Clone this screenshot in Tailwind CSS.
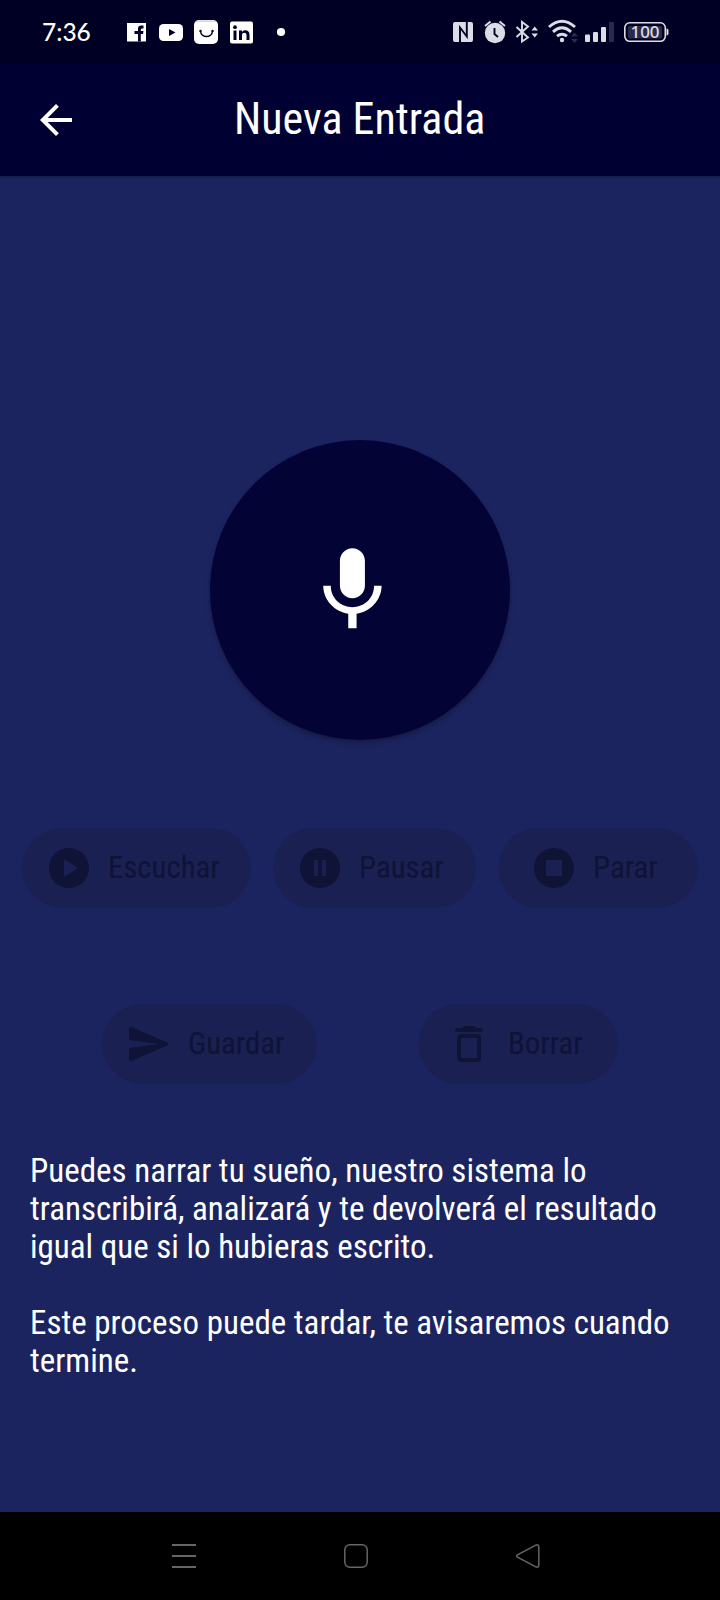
<!DOCTYPE html>
<html lang="es">
<head>
<meta charset="utf-8">
<title>Nueva Entrada</title>
<script src="https://cdn.jsdelivr.net/npm/@tailwindcss/browser@4"></script>
</head>
<body class="w-[720px] h-[1600px] overflow-hidden bg-[#1c2460] text-white font-['Roboto_Condensed','Roboto',sans-serif] font-stretch-condensed">
<div class="flex flex-col h-full">

  <!-- Status bar -->
  <div class="h-16 shrink-0 bg-[#000024] flex items-center">
    <span class="ml-[42px] w-[78px] shrink-0 font-['Lato',sans-serif] text-[24.5px] leading-8 font-medium font-stretch-normal">7:36</span>
    <svg class="w-[166px] h-16 shrink-0" viewBox="120 0 166 64" fill="#fff">
      <path d="M127 23h19v18.500h-19z"/>
      <path d="M138 41.500V34h-3.500v-3h3.500v-2.200q0-3.300 3.300-3.300h2.200v3h-1.500q-1.200 0-1.200 1.200V31h2.700l-.5 3h-2.200v7.500z" fill="#000024"/>
      <rect x="159" y="24" width="24" height="17" rx="4.500"/>
      <path d="M169 29v7l6.500-3.500z" fill="#000024"/>
      <rect x="194" y="20" width="24" height="24" rx="5"/>
      <path d="M195.500 21.800q.8-1.300 3-1.300h15q2.200 0 3 1.300z" fill="#c9c9d6"/>
      <path d="M200.500 31c.5 7.200 11.500 7.200 12 0" fill="none" stroke="#000024" stroke-width="1.500" stroke-linecap="round"/>
      <circle cx="200.500" cy="31" r="1.200" fill="#000024"/><circle cx="212.500" cy="31" r="1.200" fill="#000024"/>
      <rect x="230" y="21.500" width="23" height="22" rx="2"/>
      <path d="M233.500 30.500h3v9.500h-3zM239 30.500h3v1.400c1.900-2.700 7.500-2.200 7.500 2.600V40h-3v-5c0-3-4.500-3-4.500 0v5h-3z" fill="#000024"/>
      <circle cx="235" cy="27.200" r="1.900" fill="#000024"/>
      <circle cx="281" cy="32" r="4.100"/>
    </svg>
    <svg class="ml-[161px] w-[230px] h-16 shrink-0" viewBox="447 0 230 64" fill="#dcdce4">
      <rect x="453" y="22" width="20" height="20" rx="2"/>
      <path d="M460 42V27.500l6.800 9V22" fill="none" stroke="#000024" stroke-width="1.900"/>
      <circle cx="495" cy="33" r="10.200"/>
      <path d="M485 26l5.500-4.500M505 26l-5.500-4.500" stroke="#dcdce4" stroke-width="2"/>
      <path d="M494.500 28v6l3.500 3" fill="none" stroke="#000024" stroke-width="1.900"/>
      <path d="M516.500 27l11.500 10.500-6 4V22l6 4.500L516.500 37" fill="none" stroke="#dcdce4" stroke-width="1.900"/>
      <path d="M531.500 30.500h6.500l-3.250-4zM531.500 33.500h6.500l-3.250 4z"/>
      <g fill="none" stroke="#dcdce4" stroke-width="2.900">
        <path d="M549 27q13-11.500 26 0"/><path d="M553 31.800q9-8 18 0"/><path d="M557 36.200q5-4 10 0"/>
      </g>
      <circle cx="562" cy="40" r="2.200"/>
      <path d="M571 36.500h7l-3.500-4zM571 39h7l-3.500 4z" fill="#2b2b49"/>
      <rect x="585" y="34.500" width="5" height="7.500" rx="1"/><rect x="593" y="32" width="5" height="10" rx="1"/><rect x="601" y="27" width="5" height="15" rx="1"/>
      <rect x="609" y="22" width="5" height="20" rx="1" fill="#2b2b49"/>
      <rect x="624.800" y="22.800" width="40.500" height="18.500" rx="5" fill="none" stroke="#dcdce4" stroke-width="1.600"/>
      <rect x="628" y="26" width="34" height="12.500" rx="2" fill="#2b2b49"/>
      <path d="M666.500 28.500q2 0 2 2v3q0 2-2 2z"/>
      <text x="645" y="38.200" text-anchor="middle" font-family="Noto Sans" font-size="17" font-weight="500">100</text>
    </svg>
  </div>

  <!-- App bar -->
  <header class="relative z-10 h-28 shrink-0 bg-[#000033] flex items-center shadow-[0_1px_2px_rgba(0,0,0,0.3)]">
    <svg class="ml-8 w-12 h-12 shrink-0" viewBox="0 0 24 24" fill="#fff"><path d="M20 11H7.830l5.590-5.590L12 4l-8 8 8 8 1.410-1.410L7.830 13H20v-2z"/></svg>
    <h1 class="ml-[154px] whitespace-nowrap text-[44px] leading-[52px] -mt-0.5">Nueva Entrada</h1>
  </header>

  <main class="flex-1 flex flex-col">
    <button class="mt-[264px] mx-auto w-[300px] h-[300px] shrink-0 rounded-full bg-[#030336] flex items-center pl-[92.4px] shadow-[0_3px_5px_rgba(0,0,0,0.28)]">
      <svg class="w-[100px] h-[100px]" viewBox="0 0 24 24" fill="#fff"><path transform="translate(.1 0)" d="M12 14c1.660 0 3-1.340 3-3V5c0-1.660-1.340-3-3-3S9 3.340 9 5v6c0 1.660 1.340 3 3 3zm5.200-3c0 3-2.440 5.150-5.200 5.150S6.800 14 6.800 11H5c0 3.410 2.720 6.230 6 6.720v3.480h2v-3.480c3.280-.48 6-3.300 6-6.720h-1.800z"/></svg>
    </button>

    <div class="mt-[88px] ml-[22px] flex gap-[22px] text-[#0f1335] text-[30.8px] leading-9">
      <button class="w-[229px] h-20 rounded-full bg-[#1a2052] flex items-center">
        <svg class="ml-[23px] w-12 h-12 shrink-0" viewBox="0 0 24 24" fill="currentColor"><path d="M12 2C6.480 2 2 6.480 2 12s4.480 10 10 10 10-4.480 10-10S17.520 2 12 2zM9.500 16.500v-9l7 4.500-7 4.500z"/></svg>
        <span class="ml-[15px]">Escuchar</span>
      </button>
      <button class="w-[203px] h-20 rounded-full bg-[#1a2052] flex items-center">
        <svg class="ml-[23px] w-12 h-12 shrink-0" viewBox="0 0 24 24" fill="currentColor"><path d="M12 2C6.480 2 2 6.480 2 12s4.480 10 10 10 10-4.480 10-10S17.520 2 12 2zm-1 14H9V8h2v8zm4 0h-2V8h2v8z"/></svg>
        <span class="ml-[15px]">Pausar</span>
      </button>
      <button class="w-[200px] h-20 rounded-full bg-[#1a2052] flex items-center">
        <svg class="ml-8 w-12 h-12 shrink-0" viewBox="0 0 24 24" fill="currentColor"><path d="M12 2C6.480 2 2 6.480 2 12s4.480 10 10 10 10-4.480 10-10S17.520 2 12 2zm4 14H8V8h8v8z"/></svg>
        <span class="ml-[15px]">Parar</span>
      </button>
    </div>

    <div class="mt-24 ml-[102px] flex gap-[101px] text-[#0f1335] text-[30.8px] leading-9">
      <button class="w-[215px] h-20 rounded-full bg-[#1a2052] flex items-center">
        <svg class="ml-[23px] w-12 h-12 shrink-0" viewBox="0 0 24 24" fill="currentColor"><path d="M3.400 20.400l17.450-7.480c.81-.35.81-1.490 0-1.840L3.400 3.600c-.66-.29-1.390.2-1.390.91L2 9.120c0 .5.370.93.870.99L17 12 2.870 13.880c-.5.070-.87.500-.87 1l.01 4.610c0 .71.730 1.200 1.390.91z"/></svg>
        <span class="ml-[15px]">Guardar</span>
      </button>
      <button class="w-[200px] h-20 rounded-full bg-[#1a2052] flex items-center">
        <svg class="ml-[27px] w-12 h-12 shrink-0" viewBox="0 0 24 24" fill="currentColor"><path fill-rule="evenodd" d="M8 7h8q2 0 2 2v10q0 2-2 2H8q-2 0-2-2V9q0-2 2-2zM8.300 9Q8 9 8 9.300v9.400q0 .3.300.300h7.400q.3 0 .3-.3V9.300q0-.3-.3-.3zM6 4h2.500l.7-.7q.3-.3.700-.3h4.200q.4 0 .7.300l.7.700H18a1 1 0 0 1 0 2H6a1 1 0 0 1 0-2z"/></svg>
        <span class="ml-[15px]">Borrar</span>
      </button>
    </div>

    <div class="mt-[68px] ml-[30px] text-[33px] leading-[38px] whitespace-nowrap">
      <p>Puedes narrar tu sueño, nuestro sistema lo<br>transcribirá, analizará y te devolverá el resultado<br>igual que si lo hubieras escrito.</p>
      <p class="mt-[38px]">Este proceso puede tardar, te avisaremos cuando<br>termine.</p>
    </div>
  </main>

  <!-- Navigation bar -->
  <nav class="h-[88px] shrink-0 bg-black flex items-center">
    <svg class="ml-[172px] w-6 h-6" viewBox="0 0 24 24" stroke="#666" stroke-width="2"><path d="M0 1h24M0 12h24M0 23h24"/></svg>
    <svg class="ml-[148px] w-6 h-6" viewBox="0 0 24 24" fill="none" stroke="#666" stroke-width="1.500"><rect x=".8" y=".8" width="22.400" height="22.400" rx="5"/></svg>
    <svg class="ml-[148px] w-6 h-6" viewBox="0 0 24 24" fill="none" stroke="#666" stroke-width="1.500"><path d="M1.500 10.800L19.800 1.200Q22.800 0 22.800 3v18q0 3-3 1.800L1.500 13.200q-1.600-1.200 0-2.400z"/></svg>
  </nav>
</div>
</body>
</html>
